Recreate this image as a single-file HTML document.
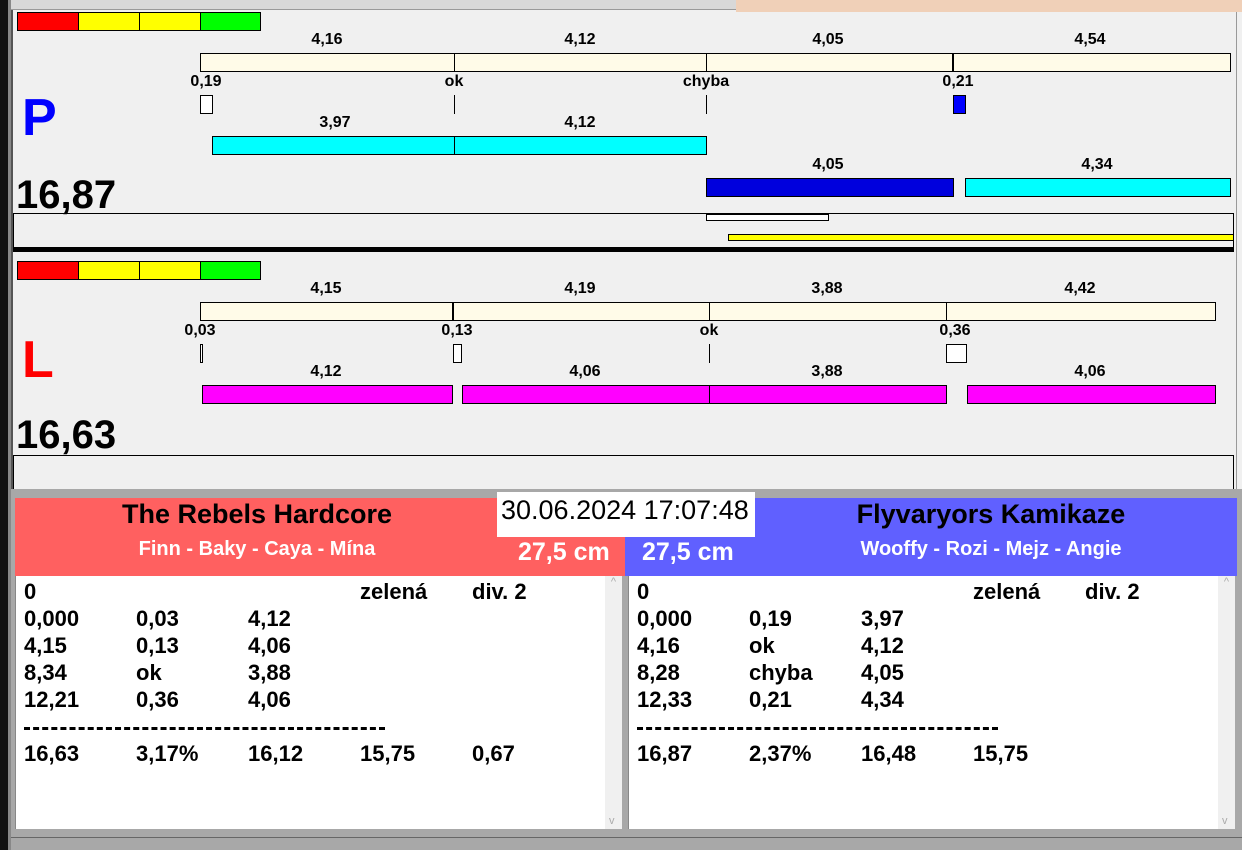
<!DOCTYPE html>
<html><head><meta charset="utf-8"><style>
body{margin:0;width:1242px;height:850px;overflow:hidden;background:#f0f0f0;position:relative;font-family:"Liberation Sans",Arial,sans-serif;font-weight:bold}
div{position:absolute;box-sizing:border-box}
.b{border:1px solid #000}
.t{font-size:16px;color:#000;transform:translateX(-50%);white-space:nowrap;line-height:18px}
.row{font-size:22px;line-height:27px;color:#000;white-space:nowrap;height:27px;width:600px}
.c{position:absolute;top:0}
</style></head><body>
<div style="left:0;top:0;width:8px;height:850px;background:#111"></div>
<div style="left:8px;top:0;width:3px;height:850px;background:#888"></div>
<div style="left:11px;top:0;width:725px;height:10px;background:#d8d8d8;border-bottom:1px solid #999"></div>
<div style="left:736px;top:0;width:506px;height:12px;background:#f0d0b8"></div>
<div style="left:11px;top:10px;width:2px;height:480px;background:#555"></div>
<div style="left:1236px;top:12px;width:6px;height:478px;background:#f0f0f0;border-left:1px solid #999"></div>

<div class="b" style="left:17px;top:12px;width:62px;height:19px;background:#f00"></div>
<div class="b" style="left:78px;top:12px;width:62px;height:19px;background:#ff0"></div>
<div class="b" style="left:139px;top:12px;width:62px;height:19px;background:#ff0"></div>
<div class="b" style="left:200px;top:12px;width:61px;height:19px;background:#0f0"></div>

<div class="t" style="left:327px;top:31px">4,16</div>
<div class="t" style="left:580px;top:31px">4,12</div>
<div class="t" style="left:828px;top:31px">4,05</div>
<div class="t" style="left:1090px;top:31px">4,54</div>
<div class="b" style="left:200px;top:53px;width:1031px;height:19px;background:#fffbe8"></div>
<div style="left:454px;top:53px;width:1px;height:19px;background:#000"></div>
<div style="left:706px;top:53px;width:1px;height:19px;background:#000"></div>
<div style="left:952px;top:53px;width:2px;height:19px;background:#000"></div>
<div class="t" style="left:206px;top:73px">0,19</div>
<div class="t" style="left:454px;top:73px">ok</div>
<div class="t" style="left:706px;top:73px">chyba</div>
<div class="t" style="left:958px;top:73px">0,21</div>
<div class="b" style="left:200px;top:95px;width:13px;height:19px;background:#fff"></div>
<div style="left:454px;top:95px;width:1px;height:19px;background:#000"></div>
<div style="left:706px;top:95px;width:1px;height:19px;background:#000"></div>
<div class="b" style="left:953px;top:95px;width:13px;height:19px;background:#00f"></div>
<div style="left:22px;top:88px;font-size:52px;color:#00f;line-height:60px">P</div>
<div class="t" style="left:335px;top:114px">3,97</div>
<div class="t" style="left:580px;top:114px">4,12</div>
<div class="b" style="left:212px;top:136px;width:495px;height:19px;background:#0ff"></div>
<div style="left:454px;top:136px;width:1px;height:19px;background:#000"></div>
<div class="t" style="left:828px;top:156px">4,05</div>
<div class="t" style="left:1097px;top:156px">4,34</div>
<div class="b" style="left:706px;top:178px;width:248px;height:19px;background:#00d"></div>
<div class="b" style="left:965px;top:178px;width:266px;height:19px;background:#0ff"></div>
<div style="left:16px;top:172px;font-size:40px;line-height:46px;color:#000">16,87</div>
<div style="left:13px;top:213px;width:1221px;height:34px;border:1px solid #000;border-bottom:none"></div>
<div class="b" style="left:706px;top:214px;width:123px;height:7px;background:#fff"></div>
<div class="b" style="left:728px;top:234px;width:506px;height:7px;background:#ff0"></div>
<div style="left:13px;top:247px;width:1221px;height:5px;background:#000"></div>

<div class="b" style="left:17px;top:261px;width:62px;height:19px;background:#f00"></div>
<div class="b" style="left:78px;top:261px;width:62px;height:19px;background:#ff0"></div>
<div class="b" style="left:139px;top:261px;width:62px;height:19px;background:#ff0"></div>
<div class="b" style="left:200px;top:261px;width:61px;height:19px;background:#0f0"></div>
<div class="t" style="left:326px;top:280px">4,15</div>
<div class="t" style="left:580px;top:280px">4,19</div>
<div class="t" style="left:827px;top:280px">3,88</div>
<div class="t" style="left:1080px;top:280px">4,42</div>
<div class="b" style="left:200px;top:302px;width:1016px;height:19px;background:#fffbe8"></div>
<div style="left:452px;top:302px;width:2px;height:19px;background:#000"></div>
<div style="left:709px;top:302px;width:1px;height:19px;background:#000"></div>
<div style="left:946px;top:302px;width:1px;height:19px;background:#000"></div>
<div class="t" style="left:200px;top:322px">0,03</div>
<div class="t" style="left:457px;top:322px">0,13</div>
<div class="t" style="left:709px;top:322px">ok</div>
<div class="t" style="left:955px;top:322px">0,36</div>
<div class="b" style="left:200px;top:344px;width:3px;height:19px;background:#fff"></div>
<div class="b" style="left:453px;top:344px;width:9px;height:19px;background:#fff"></div>
<div style="left:709px;top:344px;width:1px;height:19px;background:#000"></div>
<div class="b" style="left:946px;top:344px;width:21px;height:19px;background:#fff"></div>
<div style="left:22px;top:330px;font-size:52px;color:#f00;line-height:60px">L</div>
<div class="t" style="left:326px;top:363px">4,12</div>
<div class="t" style="left:585px;top:363px">4,06</div>
<div class="t" style="left:827px;top:363px">3,88</div>
<div class="t" style="left:1090px;top:363px">4,06</div>
<div class="b" style="left:202px;top:385px;width:251px;height:19px;background:#f0f"></div>
<div class="b" style="left:462px;top:385px;width:485px;height:19px;background:#f0f"></div>
<div style="left:709px;top:385px;width:1px;height:19px;background:#000"></div>
<div class="b" style="left:967px;top:385px;width:249px;height:19px;background:#f0f"></div>
<div style="left:16px;top:412px;font-size:40px;line-height:46px;color:#000">16,63</div>
<div style="left:13px;top:455px;width:1221px;height:34px;border:1px solid #000;border-bottom:none"></div>

<div style="left:11px;top:489px;width:1231px;height:361px;background:#a8a8a8"></div>
<div style="left:15px;top:498px;width:610px;height:78px;background:#ff6060"></div>
<div style="left:625px;top:498px;width:612px;height:78px;background:#6060ff"></div>
<div style="left:497px;top:492px;width:258px;height:45px;background:#fff;font-weight:normal;font-size:27px;line-height:36px;padding-left:4px;color:#000;white-space:nowrap">30.06.2024 17:07:48</div>
<div style="left:15px;top:498px;width:484px;text-align:center;font-size:27px;line-height:33px;color:#000">The Rebels Hardcore</div>
<div style="left:15px;top:537px;width:484px;text-align:center;font-size:20px;line-height:24px;color:#fff">Finn - Baky - Caya - Mína</div>
<div style="left:518px;top:538px;font-size:25px;line-height:29px;color:#fff">27,5 cm</div>
<div style="left:642px;top:538px;font-size:25px;line-height:29px;color:#fff">27,5 cm</div>
<div style="left:750px;top:498px;width:482px;text-align:center;font-size:27px;line-height:33px;color:#000">Flyvaryors Kamikaze</div>
<div style="left:750px;top:537px;width:482px;text-align:center;font-size:20px;line-height:24px;color:#fff">Wooffy - Rozi - Mejz - Angie</div>

<div style="left:15px;top:576px;width:607px;height:253px;background:#fff;border-left:1px solid #888"></div>
<div style="left:605px;top:576px;width:17px;height:253px;background:#f0f0f0;color:#aaa;font-size:11px;text-align:center;font-weight:normal">^<br><span style="position:absolute;bottom:2px;left:4px">v</span></div>
<div style="left:628px;top:576px;width:607px;height:253px;background:#fff;border-left:1px solid #888"></div>
<div style="left:1218px;top:576px;width:17px;height:253px;background:#f0f0f0;color:#aaa;font-size:11px;text-align:center;font-weight:normal">^<br><span style="position:absolute;bottom:2px;left:4px">v</span></div>

<div class="row" style="left:24px;top:578px"><span class="c" style="left:0">0</span><span class="c" style="left:336px">zelená</span><span class="c" style="left:448px">div. 2</span></div>
<div class="row" style="left:24px;top:605px"><span class="c" style="left:0">0,000</span><span class="c" style="left:112px">0,03</span><span class="c" style="left:224px">4,12</span></div>
<div class="row" style="left:24px;top:632px"><span class="c" style="left:0">4,15</span><span class="c" style="left:112px">0,13</span><span class="c" style="left:224px">4,06</span></div>
<div class="row" style="left:24px;top:659px"><span class="c" style="left:0">8,34</span><span class="c" style="left:112px">ok</span><span class="c" style="left:224px">3,88</span></div>
<div class="row" style="left:24px;top:686px"><span class="c" style="left:0">12,21</span><span class="c" style="left:112px">0,36</span><span class="c" style="left:224px">4,06</span></div>
<div style="left:24px;top:727px;width:361px;height:3px;border-top:3px dashed #000"></div>
<div class="row" style="left:24px;top:740px"><span class="c" style="left:0">16,63</span><span class="c" style="left:112px">3,17%</span><span class="c" style="left:224px">16,12</span><span class="c" style="left:336px">15,75</span><span class="c" style="left:448px">0,67</span></div>

<div class="row" style="left:637px;top:578px"><span class="c" style="left:0">0</span><span class="c" style="left:336px">zelená</span><span class="c" style="left:448px">div. 2</span></div>
<div class="row" style="left:637px;top:605px"><span class="c" style="left:0">0,000</span><span class="c" style="left:112px">0,19</span><span class="c" style="left:224px">3,97</span></div>
<div class="row" style="left:637px;top:632px"><span class="c" style="left:0">4,16</span><span class="c" style="left:112px">ok</span><span class="c" style="left:224px">4,12</span></div>
<div class="row" style="left:637px;top:659px"><span class="c" style="left:0">8,28</span><span class="c" style="left:112px">chyba</span><span class="c" style="left:224px">4,05</span></div>
<div class="row" style="left:637px;top:686px"><span class="c" style="left:0">12,33</span><span class="c" style="left:112px">0,21</span><span class="c" style="left:224px">4,34</span></div>
<div style="left:637px;top:727px;width:361px;height:3px;border-top:3px dashed #000"></div>
<div class="row" style="left:637px;top:740px"><span class="c" style="left:0">16,87</span><span class="c" style="left:112px">2,37%</span><span class="c" style="left:224px">16,48</span><span class="c" style="left:336px">15,75</span></div>

<div style="left:11px;top:837px;width:1231px;height:1px;background:#666"></div>
</body></html>
